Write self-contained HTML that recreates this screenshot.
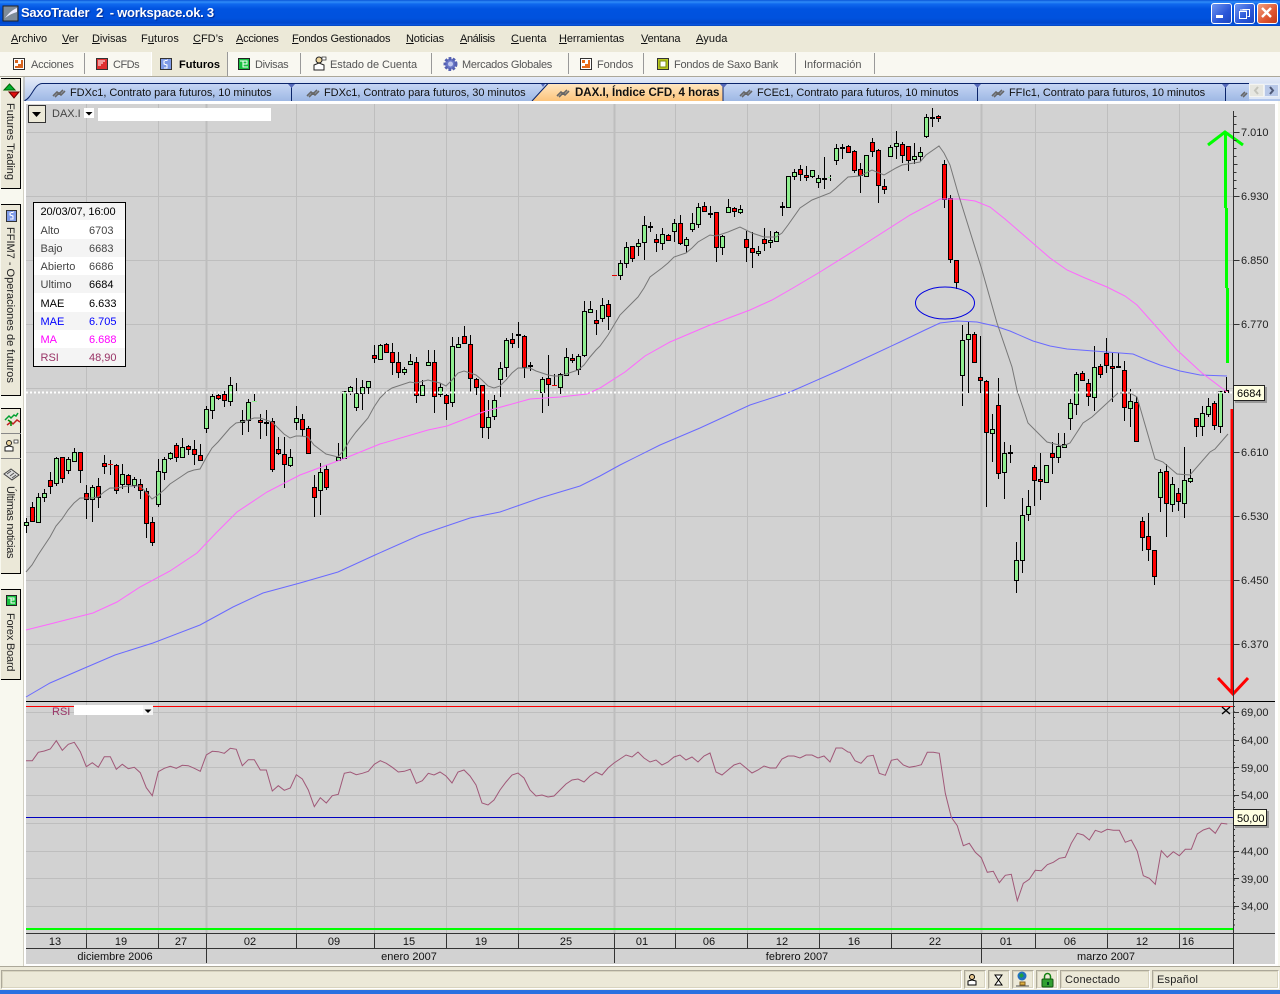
<!DOCTYPE html>
<html lang="es"><head><meta charset="utf-8"><title>SaxoTrader 2</title>
<style>
html,body{margin:0;padding:0;background:#f8f8ef}
body{width:1280px;height:994px;position:relative;overflow:hidden;font:11px "Liberation Sans",Arial,sans-serif;color:#000}
.a{position:absolute;white-space:nowrap}
.m{top:32px;font-size:11px;line-height:14px;color:#111}
.t{top:58px;font-size:11px;line-height:14px;color:#555}
.s{top:53px;width:1px;height:21px;background:#999}
.v{left:1px;width:19px;background:#ebe8d8;border:1px solid #000;border-left:none}
.r{position:absolute;left:0;width:19px;transform-origin:0 0;transform:translateX(19px) rotate(90deg);white-space:nowrap;font-size:11px;line-height:18px;color:#222}
.p{position:absolute;top:970px;height:17px;background:#ece9d8;border:1px solid;border-color:#aca899 #fff #fff #aca899;outline:1px solid #d8d4c0;outline-offset:-2px}
svg{position:absolute;left:0;top:0}
.w{position:absolute;top:3px;width:19px;height:19px;border:1px solid #fff;border-radius:3px}
</style></head><body>
<div class="a" style="left:0;top:0;width:1280px;height:26px;background:linear-gradient(#0a56d8 0,#2f8cf8 2px,#0f68ee 4px,#0053e0 9px,#0052de 18px,#0047cc 23px,#0a58e4 25px,#003ca8 26px)"></div>
<svg width="18" height="18" style="left:2px;top:5px"><rect x="1" y="1" width="15" height="15" fill="#7f8c99" stroke="#222"/><path d="M3 13C7 8 10 5 15 3V7C11 8 7 10 3 13Z" fill="#eef"/></svg>
<div class="a" style="left:21px;top:5px;font-size:13px;line-height:16px;font-weight:bold;color:#fff;letter-spacing:-.25px;text-shadow:1px 1px 1px #002a90;white-space:pre">SaxoTrader  2  - workspace.ok. 3</div>
<div class="w" style="left:1211px;background:linear-gradient(135deg,#6f96f0,#2a56d8 60%,#1c46c0)"></div>
<div class="w" style="left:1234px;background:linear-gradient(135deg,#6f96f0,#2a56d8 60%,#1c46c0)"></div>
<div class="w" style="left:1257px;background:linear-gradient(135deg,#f0a080,#df5530 60%,#c23a18)"></div>
<svg width="1280" height="26"><rect x="1216" y="15" width="7" height="3" fill="#fff"/><path d="M1242.5 9.5h7v7h-2M1239.5 11.5h7v7h-7z" fill="none" stroke="#fff"/><path d="M1240 10h7" stroke="#fff"/><path d="M1262 8l9 9M1271 8l-9 9" stroke="#fff" stroke-width="2.4"/></svg>

<div class="a" style="left:0;top:26px;width:1280px;height:26px;background:#ece9d8"></div>
<div class="a m" style="left:11px;letter-spacing:-.1px"><u>A</u>rchivo</div>
<div class="a m" style="left:62px"><u>V</u>er</div>
<div class="a m" style="left:92px;letter-spacing:-.1px"><u>D</u>ivisas</div>
<div class="a m" style="left:141px;letter-spacing:.1px">F<u>u</u>turos</div>
<div class="a m" style="left:193px"><u>C</u>FD’s</div>
<div class="a m" style="left:236px;letter-spacing:-.25px"><u>A</u>cciones</div>
<div class="a m" style="left:292px;letter-spacing:-.18px"><u>F</u>ondos Gestionados</div>
<div class="a m" style="left:406px;letter-spacing:-.15px"><u>N</u>oticias</div>
<div class="a m" style="left:460px;letter-spacing:-.4px"><u>A</u>nálisis</div>
<div class="a m" style="left:511px"><u>C</u>uenta</div>
<div class="a m" style="left:559px;letter-spacing:-.07px"><u>H</u>erramientas</div>
<div class="a m" style="left:641px;letter-spacing:-.15px"><u>V</u>entana</div>
<div class="a m" style="left:696px;letter-spacing:.1px"><u>A</u>yuda</div>

<div class="a" style="left:0;top:52px;width:1280px;height:24px;background:#f9f8f1"></div>
<div class="a" style="left:0;top:76px;width:1280px;height:1px;background:#aca899"></div>
<div class="a" style="left:151px;top:52px;width:75px;height:24px;background:#ece9d8;border-left:1px solid #fff;border-right:1px solid #999"></div>
<div class="a s" style="left:84px"></div><div class="a s" style="left:300px"></div><div class="a s" style="left:431px"></div><div class="a s" style="left:568px"></div><div class="a s" style="left:643px"></div><div class="a s" style="left:795px"></div><div class="a s" style="left:874px"></div>
<div class="a t" style="left:31px;letter-spacing:-.25px">Acciones</div>
<div class="a t" style="left:113px;letter-spacing:-.5px">CFDs</div>
<div class="a t" style="left:179px;font-weight:bold;color:#000">Futuros</div>
<div class="a t" style="left:255px;letter-spacing:-.3px">Divisas</div>
<div class="a t" style="left:330px;letter-spacing:-.06px">Estado de Cuenta</div>
<div class="a t" style="left:462px;letter-spacing:-.28px">Mercados Globales</div>
<div class="a t" style="left:597px;letter-spacing:-.08px">Fondos</div>
<div class="a t" style="left:674px;letter-spacing:-.22px">Fondos de Saxo Bank</div>
<div class="a t" style="left:804px">Información</div>

<!-- left strip tabs -->
<div class="a v" style="top:78px;height:109px"></div>
<div class="a v" style="top:204px;height:190px"></div>
<div class="a v" style="top:408px;height:164px"></div>
<div class="a v" style="top:589px;height:89px"></div>
<div class="a" style="left:1px;top:433px;width:20px;height:1px;background:#888"></div>
<div class="a" style="left:1px;top:458px;width:20px;height:1px;background:#888"></div>
<div class="r" style="top:103px">Futures Trading</div>
<div class="r" style="top:227px">FFIM7 - Operaciones de futuros</div>
<div class="r" style="top:486px;letter-spacing:-.3px">Últimas noticias</div>
<div class="r" style="top:613px;letter-spacing:-.2px">Forex Board</div>

<svg width="1280" height="994">
<defs>
<linearGradient id="g1" x1="0" y1="0" x2="0" y2="1"><stop offset="0" stop-color="#c6d6f4"/><stop offset="1" stop-color="#9eb8e4"/></linearGradient>
<linearGradient id="g2" x1="0" y1="0" x2="0" y2="1"><stop offset="0" stop-color="#ffe6c0"/><stop offset="1" stop-color="#fcc47c"/></linearGradient>
<linearGradient id="g0" x1="0" y1="0" x2="0" y2="1"><stop offset="0" stop-color="#e6ecf8"/><stop offset="1" stop-color="#aec4ea"/></linearGradient>
</defs>
<!-- toolbar icons -->
<g shape-rendering="crispEdges">
<rect x="13.5" y="58.5" width="11" height="11" fill="#fff" stroke="#333"/><rect x="15" y="60" width="8" height="8" fill="#d8641e"/><rect x="18" y="60" width="3" height="4" fill="#fff"/><rect x="15" y="63" width="3" height="3" fill="#fff"/>
<rect x="96.5" y="58.5" width="11" height="11" fill="#e03030" stroke="#333"/><path d="M98 61h7M98 63h5M98 65h3" stroke="#fff"/>
<rect x="160.5" y="58.5" width="11" height="11" fill="#7f9be8" stroke="#333"/><path d="M168 60l-4 1v3l3 1v3l-3 0" fill="none" stroke="#fff"/>
<rect x="238.5" y="58.5" width="11" height="11" fill="#18c040" stroke="#222"/><path d="M240 61h7v3h-4v3h5M243 61v3" fill="none" stroke="#fff"/>
<rect x="580.5" y="58.5" width="11" height="11" fill="#fff" stroke="#333"/><rect x="582" y="60" width="8" height="8" fill="#e86a18"/><rect x="585" y="60" width="3" height="4" fill="#fff"/><rect x="582" y="63" width="3" height="3" fill="#fff"/>
<rect x="657.5" y="58.5" width="11" height="11" fill="#b8c820" stroke="#333"/><rect x="660" y="61" width="6" height="6" fill="#fff" stroke="#7a8a10"/>
</g>
<circle cx="319" cy="60" r="3" fill="#f0d8a0" stroke="#222"/><path d="M314 70v-5l5-2 5 2v5z" fill="#fff" stroke="#222"/><rect x="322" y="57" width="4" height="3" fill="#fff" stroke="#222" stroke-width=".7"/>
<circle cx="450.500" cy="64" r="5.500" fill="#6a78c8" stroke="#5560b0" stroke-width="3" stroke-dasharray="2.500 1.500"/><circle cx="450.500" cy="64" r="2.500" fill="#c0c8ee"/>

<!-- tab row -->
<rect x="23" y="77" width="1257" height="24" fill="url(#g0)"/>
<path d="M24 101C32 98 34 84 42 83.500H1249V101Z" fill="url(#g1)"/>
<path d="M532 101L548 84H723V101Z" fill="url(#g2)"/>
<path d="M24 101C32 98 34 84 42 83.500H1249" fill="none" stroke="#0a246a"/>
<path d="M532 101L548 83.500M291.500 84V101M723 84V101M977.500 84V101M1225.500 84V101" fill="none" stroke="#0a246a"/>
<path d="M288 84h7l-3.500 4zM720 84h7l-3.500 4zM974 84h7l-3.500 4zM1222 84h7l-3.500 4zM541 84h4l-2 3z" fill="#5568b8"/>
<g font-size="11" font-family="Liberation Sans,Arial,sans-serif" fill="#111" letter-spacing="-.05">
<text x="70" y="96">FDXc1, Contrato para futuros, 10 minutos</text>
<text x="324" y="96">FDXc1, Contrato para futuros, 30 minutos</text>
<text x="575" y="96" font-weight="bold" letter-spacing="0" font-size="11.500">DAX.I, Índice CFD, 4 horas</text>
<text x="757" y="96">FCEc1, Contrato para futuros, 10 minutos</text>
<text x="1009" y="96">FFIc1, Contrato para futuros, 10 minutos</text>
</g>
<g fill="none" stroke="#666" stroke-width="1.600">
<path d="M53 96l4-4 2 2 4-4M55 97l4-4 2 2 4-4M307 96l4-4 2 2 4-4M309 97l4-4 2 2 4-4M557 96l4-4 2 2 4-4M559 97l4-4 2 2 4-4M740 96l4-4 2 2 4-4M742 97l4-4 2 2 4-4M992 96l4-4 2 2 4-4M994 97l4-4 2 2 4-4M1241 96l4-4M1243 97l4-4"/>
</g>
<rect x="1249" y="83" width="31" height="16" fill="#dfe7f6"/>
<rect x="1249.500" y="84.500" width="14" height="12" fill="#e6e6e0" stroke="#f4f4f0"/><rect x="1264.500" y="84.500" width="14" height="12" fill="#b8c8e8" stroke="#e8eef8"/>
<path d="M1258 87l-3 3.500 3 3.500" fill="none" stroke="#c4c4bc" stroke-width="2"/><path d="M1270 87l3 3.500-3 3.500" fill="none" stroke="#505a78" stroke-width="2"/>

<!-- left icons -->
<path d="M4 90l5.500-6 5.500 6z" fill="#00b030" stroke="#060"/><path d="M9 92h10l-5 6z" fill="#e01010" stroke="#600"/>
<g shape-rendering="crispEdges"><rect x="6.500" y="210.500" width="10" height="11" fill="#7f9be8" stroke="#333"/><path d="M14 212l-4 1v2l3 1v3l-3 0" fill="none" stroke="#fff"/>
<rect x="6.500" y="595.500" width="10" height="10" fill="#18c040" stroke="#222"/><path d="M8 598h6v2h-3v3h4M11 598v2" fill="none" stroke="#fff"/></g>
<path d="M5 420l4-4 2 2 3-3 2 1 2-3" fill="none" stroke="#00a030" stroke-width="1.500"/><path d="M7 425l4-3 2 2 4-4 3 2" fill="none" stroke="#c02020" stroke-width="1.500"/><path d="M8 420l3 2v4" fill="none" stroke="#080" stroke-width="1.500"/>
<circle cx="9" cy="443" r="2.500" fill="#f0d8a0" stroke="#222"/><path d="M5 451v-4l4-1 4 1v4z" fill="#fff" stroke="#222"/><rect x="14" y="440" width="4" height="3" fill="#fff" stroke="#222" stroke-width=".7"/>
<path d="M4 474l7-5 8 6-7 5z" fill="#ddd" stroke="#444"/><path d="M7 474l4-3M10 476l4-3M12 478l4-3" stroke="#555"/>

<!-- chart frame -->
<rect x="23.500" y="77" width="1" height="890" fill="#aca899"/>
<rect x="24" y="101" width="1254" height="866" fill="#fff"/>
<rect x="26" y="104" width="1249" height="860" fill="#d2d2d2"/>
<rect x="23" y="966" width="1257" height="1" fill="#aca899"/>
<rect x="0" y="967" width="1280" height="23" fill="#ece9d8"/>
<rect x="0" y="966" width="24" height="1" fill="#aca899"/>
<rect x="0" y="990" width="1280" height="4" fill="#2a70e0"/>

<!-- grid -->
<g stroke="#bebebe" shape-rendering="crispEdges" fill="none">
<path d="M86.500 104V933M158.500 104V933M296.500 104V933M374.500 104V933M446.500 104V933M518.500 104V933M675.500 104V933M747.500 104V933M819.500 104V933M891.500 104V933M1035.500 104V933M1107.500 104V933M1179.500 104V933"/>
<path d="M26 132.500H1240M26 196.500H1240M26 260.500H1240M26 324.500H1240M26 388.500H1240M26 452.500H1240M26 516.500H1240M26 580.500H1240M26 644.500H1240M26 712.500H1233M26 740.500H1233M26 767.500H1233M26 795.500H1233M26 823.500H1233M26 851.500H1233M26 878.500H1233M26 906.500H1233"/>
<path d="M206.500 104V933M614.500 104V933M981.500 104V933" stroke-width="2"/>
</g>

<!-- wicks -->
<path shape-rendering="crispEdges" fill="none" stroke="#000" d="M26.500 518V533M32.500 502V522M38.500 493V522M44.500 489V502M50.500 472V494M56.500 457V486M62.500 457V483M68.500 457V474M74.500 448V462M80.500 452V483M86.500 485V519M92.500 485V522M98.500 478V508M104.500 455V474M110.500 460V475M116.500 464V494M122.500 464V489M128.500 474V493M134.500 477V488M140.500 479V499M146.500 488V538M152.500 517V546M158.500 459V507M164.500 457V480M170.500 452V460M176.500 443V462M182.500 438V458M188.500 445V455M194.500 440V465M200.500 444V461M206.500 406V433M212.500 394V419M218.500 394V400M224.500 391V407M230.500 377V406M236.500 383V391M242.500 410V435M248.500 399V432M254.500 394V402M260.500 414V439M266.500 410V436M272.500 418V472M278.500 437V455M284.500 437V488M290.500 449V467M296.500 406V430M302.500 414V436M308.500 426V454M314.500 475V517M320.500 463V515M326.500 465V490M338.500 443V460M344.500 391V459M350.500 386V395M356.500 378V411M362.500 380V410M368.500 381V394M374.500 345V363M380.500 344V359M386.500 343V353M392.500 343V375M398.500 352V378M404.500 367V375M410.500 354V365M416.500 357V403M422.500 380V395M428.500 350V366M434.500 350V413M440.500 383V397M446.500 394V420M452.500 337V407M458.500 337V348M464.500 326V344M470.500 335V393M476.500 378V395M482.500 385V438M488.500 400V439M494.500 395V420M500.500 362V397M506.500 338V377M512.500 333V348M518.500 322V348M524.500 335V378M530.500 362V371M542.500 377V413M548.500 355V406M554.500 374V385M560.500 373V394M566.500 348V375M572.500 354V363M578.500 354V375M584.500 301V357M590.500 301V313M596.500 310V335M602.500 298V322M608.500 300V330M620.500 260V280M626.500 242V268M632.500 246V262M638.500 239V256M644.500 216V260M650.500 222V232M656.500 234V252M662.500 228V250M668.500 234V241M674.500 219V242M680.500 215V245M686.500 237V253M692.500 213V232M698.500 203V228M704.500 202V212M710.500 206V218M716.500 212V262M722.500 235V255M728.500 199V213M734.500 207V217M740.500 205V214M746.500 231V262M752.500 232V268M758.500 246V256M764.500 228V251M770.500 231V248M776.500 231V241M782.500 202V216M788.500 176V207M794.500 169V180M800.500 165V181M806.500 166V181M812.500 170V178M818.500 175V188M824.500 157V189M830.500 175V181M836.500 144V165M842.500 144V159M848.500 145V153M854.500 150V173M860.500 163V193M866.500 155V176M872.500 138V157M878.500 149V203M884.500 179V194M890.500 145V157M896.500 131V159M902.500 142V163M908.500 146V171M914.500 143V164M920.500 147V161M926.500 114V138M932.500 108V127M938.500 115V122M944.500 160V208M950.500 195V263M956.500 260V289M962.500 325V406M968.500 322V393M974.500 332V362M980.500 336V393M986.500 380V507M992.500 414V462M998.500 378V479M1004.500 442V499M1010.500 445V463M1016.500 542V593M1022.500 498V573M1028.500 490V521M1034.500 465V506M1040.500 453V500M1046.500 465V483M1052.500 442V474M1058.500 433V463M1064.500 433V448M1070.500 399V430M1076.500 372V415M1082.500 371V381M1088.500 379V406M1094.500 346V411M1100.500 364V378M1106.500 338V373M1112.500 353V402M1118.500 353V368M1124.500 361V421M1130.500 389V427M1136.500 397V441M1142.500 517V551M1148.500 513V561M1154.500 550V585M1160.500 469V512M1166.500 464V537M1172.500 477V512M1178.500 488V511M1184.500 447V518M1190.500 469V483M1196.500 418V437M1202.500 406V436M1208.500 398V417M1214.500 401V430M1220.500 391V433M1226.500 377V393"/>
<!-- green bodies -->
<path shape-rendering="crispEdges" fill="#90ee90" stroke="#000" d="M24.500 522.500h4v3h-4zM36.500 497.500h4v25h-4zM42.500 493.500h4v4h-4zM54.500 458.500h4v25h-4zM66.500 459.500h4v11h-4zM72.500 452.500h4v9h-4zM90.500 487.500h4v12h-4zM120.500 474.500h4v10h-4zM132.500 479.500h4v6h-4zM156.500 471.500h4v33h-4zM162.500 459.500h4v13h-4zM168.500 453.500h4v5h-4zM180.500 447.500h4v10h-4zM204.500 409.500h4v19h-4zM210.500 396.500h4v14h-4zM228.500 385.500h4v16h-4zM240.500 420.500h4v2h-4zM246.500 402.500h4v18h-4zM288.500 457.500h4v8h-4zM294.500 418.500h4v4h-4zM318.500 472.500h4v18h-4zM336.500 457.500h4v3h-4zM342.500 391.500h4v67h-4zM348.500 387.500h4v4h-4zM354.500 393.500h4v14h-4zM360.500 387.500h4v6h-4zM366.500 381.500h4v6h-4zM378.500 345.500h4v14h-4zM402.500 369.500h4v3h-4zM408.500 361.500h4v3h-4zM420.500 385.500h4v10h-4zM426.500 362.500h4v3h-4zM438.500 387.500h4v7h-4zM450.500 346.500h4v56h-4zM456.500 344.500h4v3h-4zM486.500 417.500h4v10h-4zM492.500 400.500h4v16h-4zM498.500 368.500h4v11h-4zM504.500 340.500h4v27h-4zM540.500 379.500h4v13h-4zM558.500 374.500h4v13h-4zM564.500 357.500h4v18h-4zM576.500 356.500h4v13h-4zM582.500 311.500h4v44h-4zM588.500 309.500h4v3h-4zM600.500 305.500h4v13h-4zM618.500 263.500h4v12h-4zM624.500 247.500h4v16h-4zM636.500 243.500h4v3h-4zM642.500 225.500h4v17h-4zM660.500 234.500h4v9h-4zM672.500 223.500h4v8h-4zM684.500 239.500h4v6h-4zM690.500 223.500h4v6h-4zM696.500 207.500h4v17h-4zM720.500 236.500h4v11h-4zM726.500 207.500h4v5h-4zM738.500 209.500h4v3h-4zM756.500 251.500h4v2h-4zM768.500 240.500h4v2h-4zM774.500 232.500h4v9h-4zM786.500 176.500h4v31h-4zM792.500 172.500h4v4h-4zM810.500 170.500h4v6h-4zM816.500 178.500h4v4h-4zM834.500 148.500h4v12h-4zM864.500 155.500h4v21h-4zM888.500 147.500h4v9h-4zM894.500 143.500h4v3h-4zM912.500 156.500h4v3h-4zM918.500 152.500h4v4h-4zM924.500 117.500h4v19h-4zM960.500 340.500h4v35h-4zM966.500 334.500h4v5h-4zM990.500 429.500h4v4h-4zM1002.500 453.500h4v19h-4zM1014.500 560.500h4v20h-4zM1020.500 515.500h4v45h-4zM1026.500 506.500h4v8h-4zM1044.500 465.500h4v17h-4zM1056.500 446.500h4v11h-4zM1062.500 444.500h4v3h-4zM1068.500 403.500h4v15h-4zM1074.500 374.500h4v30h-4zM1092.500 367.500h4v30h-4zM1128.500 401.500h4v7h-4zM1158.500 472.500h4v25h-4zM1170.500 484.500h4v20h-4zM1182.500 480.500h4v23h-4zM1188.500 478.500h4v3h-4zM1200.500 413.500h4v13h-4zM1206.500 406.500h4v8h-4zM1218.500 391.500h4v35h-4z"/>
<!-- red bodies and dashes -->
<path shape-rendering="crispEdges" fill="#f00" stroke="#000" d="M30.500 507.500h4v14h-4zM48.500 480.500h4v6h-4zM60.500 457.500h4v21h-4zM78.500 452.500h4v18h-4zM84.500 493.500h4v6h-4zM96.500 486.500h4v11h-4zM102.500 463.500h4v3h-4zM114.500 465.500h4v25h-4zM126.500 475.500h4v9h-4zM138.500 484.500h4v6h-4zM144.500 491.500h4v32h-4zM150.500 522.500h4v20h-4zM174.500 445.500h4v12h-4zM186.500 446.500h4v3h-4zM192.500 449.500h4v5h-4zM198.500 455.500h4v5h-4zM216.500 395.500h4v3h-4zM222.500 394.500h4v6h-4zM258.500 420.500h4v2h-4zM270.500 421.500h4v48h-4zM276.500 449.500h4v4h-4zM282.500 454.500h4v10h-4zM300.500 419.500h4v10h-4zM306.500 428.500h4v25h-4zM312.500 487.500h4v10h-4zM324.500 469.500h4v18h-4zM372.500 355.500h4v3h-4zM384.500 344.500h4v8h-4zM390.500 352.500h4v10h-4zM396.500 362.500h4v10h-4zM414.500 362.500h4v33h-4zM432.500 362.500h4v34h-4zM444.500 395.500h4v8h-4zM462.500 336.500h4v7h-4zM468.500 344.500h4v34h-4zM474.500 379.500h4v8h-4zM480.500 385.500h4v42h-4zM510.500 339.500h4v4h-4zM522.500 336.500h4v31h-4zM546.500 378.500h4v6h-4zM570.500 358.500h4v2h-4zM594.500 320.500h4v3h-4zM606.500 304.500h4v12h-4zM630.500 246.500h4v12h-4zM654.500 239.500h4v3h-4zM666.500 235.500h4v5h-4zM678.500 223.500h4v20h-4zM702.500 206.500h4v5h-4zM714.500 212.500h4v35h-4zM732.500 208.500h4v3h-4zM744.500 239.500h4v8h-4zM750.500 248.500h4v4h-4zM762.500 239.500h4v4h-4zM798.500 169.500h4v5h-4zM804.500 175.500h4v2h-4zM846.500 146.500h4v6h-4zM852.500 151.500h4v19h-4zM858.500 169.500h4v6h-4zM870.500 142.500h4v9h-4zM876.500 150.500h4v35h-4zM882.500 186.500h4v3h-4zM900.500 144.500h4v11h-4zM906.500 146.500h4v14h-4zM936.500 116.500h4v2h-4zM942.500 164.500h4v35h-4zM948.500 198.500h4v61h-4zM954.500 260.500h4v22h-4zM972.500 334.500h4v28h-4zM978.500 377.500h4v3h-4zM984.500 381.500h4v51h-4zM996.500 405.500h4v68h-4zM1032.500 467.500h4v13h-4zM1038.500 479.500h4v2h-4zM1050.500 453.500h4v4h-4zM1080.500 373.500h4v7h-4zM1086.500 383.500h4v13h-4zM1098.500 366.500h4v8h-4zM1104.500 353.500h4v12h-4zM1110.500 366.500h4v2h-4zM1122.500 370.500h4v37h-4zM1134.500 402.500h4v39h-4zM1140.500 521.500h4v16h-4zM1146.500 536.500h4v13h-4zM1152.500 550.500h4v26h-4zM1164.500 471.500h4v32h-4zM1176.500 493.500h4v8h-4zM1194.500 418.500h4v8h-4zM1212.500 403.500h4v22h-4zM1224.500 390.500h4v2h-4z"/>
<path shape-rendering="crispEdges" fill="none" stroke="#000" stroke-width="2" d="M264 423h5M516 335h5M528 366h5M648 227h5M708 214h5M780 207h5M822 179h5M840 148h5M930 118h5M1008 453h5M1116 367h5"/>
<path shape-rendering="crispEdges" fill="none" stroke="#e00000" d="M108 464.500h5M552 385.500h5M612 275.500h5"/>
<path shape-rendering="crispEdges" fill="none" stroke="#90ee90" d="M252 401.500h5M534 390.500h5M828 177.500h3"/>

<!-- MA lines -->
<polyline fill="none" stroke="#6a6aff" points="26,697 50,683 80,670 115,655 153,643 200,625 233,607 263,593 300,583 338,572 375,555 420,535 470,518 500,512 520,505 540,498 580,486 600,476 620,465 660,445 700,428 750,405 790,392 840,370 900,342 925,330 940,323 957,321 977,322 995,326 1010,331 1033,341 1050,346 1067,349 1107,352 1133,354 1147,360 1160,365 1180,371 1200,375 1227,376"/>
<polyline fill="none" stroke="#ff66ff" points="26,630 50,624 93,613 117,602 140,587 170,571 197,553 217,532 237,512 267,492 300,475 343,459 380,444 428,430 447,426 483,412 530,399 560,397 587,394 600,388 625,372 645,356 670,342 710,325 750,310 772,300 793,288 820,272 860,247 910,215 940,199 960,199 975,201 990,207 1005,219 1020,232 1035,245 1050,258 1067,270 1085,278 1107,287 1125,296 1137,305 1153,323 1177,350 1202,373 1227,392"/>
<polyline fill="none" stroke="#777" points="26,572 32,565 38,555 44,546 50,537 56,526 62,519 68,510 74,503 80,498 86,498 92,498 98,497 104,492 110,488 116,488 122,487 128,486 134,486 140,486 146,492 152,499 158,495 164,490 170,484 176,480 182,476 188,472 194,470 200,469 206,458 212,448 218,442 224,435 230,428 236,423 242,422 248,420 254,418 260,418 266,420 272,422 278,428 284,434 290,438 296,436 300,436 308,437 314,445 326,454 338,457 344,450 350,440 356,432 362,425 368,418 374,407 380,398 386,392 392,388 398,386 410,382 416,383 428,380 440,383 446,386 452,380 458,373 464,371 470,373 476,375 482,380 488,386 494,388 500,386 506,380 512,373 518,368 524,368 530,368 536,371 542,373 548,375 554,376 560,376 566,374 572,372 578,370 584,365 590,357 596,350 600,346 608,335 620,315 638,297 644,288 650,277 662,268 668,263 674,257 686,253 692,248 698,242 710,235 716,236 728,232 740,227 752,233 764,237 776,237 782,233 788,225 800,208 812,200 830,193 836,188 848,177 860,176 872,170 884,175 896,168 902,165 920,162 926,155 939,146 944,153 950,165 958,193 982,270 997,323 1012,367 1017,390 1028,423 1047,442 1063,446 1070,443 1083,423 1092,417 1118,393 1130,393 1137,397 1155,459 1163,462 1177,474 1190,475 1210,452 1215,449 1228,434"/>
<!-- dotted price line -->
<path d="M26 392.500H1233" stroke="#fff" stroke-width="2" stroke-dasharray="2 2" shape-rendering="crispEdges"/>
<!-- annotations -->
<ellipse cx="945" cy="303" rx="29.500" ry="16" fill="none" stroke="#0000e0"/>
<path d="M1225.500 133V208M1226.500 208V288M1227.500 288V363" stroke="#00ff00" stroke-width="3" fill="none"/>
<path d="M1208 145L1225 132L1243 145" stroke="#00ff00" stroke-width="3" fill="none"/>
<path d="M1232 409V692" stroke="#f00" stroke-width="3" fill="none"/>
<path d="M1218 678L1233 694L1248 678" stroke="#f00" stroke-width="3" fill="none"/>

<!-- top-left controls -->
<rect x="28.500" y="105.500" width="17" height="17" fill="#ece9d8" stroke="#333"/><path d="M32 112h9l-4.500 5z" fill="#000"/>
<text x="52" y="117" font-size="11" fill="#444" font-family="Liberation Sans,Arial,sans-serif">DAX.I</text>
<rect x="84" y="108" width="10" height="10" fill="#fff"/><path d="M85.500 112h7l-3.500 3.500z" fill="#000"/>
<rect x="98" y="108" width="173" height="13" fill="#fff"/>

<!-- axis -->
<g shape-rendering="crispEdges" fill="none" stroke="#333">
<path d="M1233.500 111V964"/>
<path d="M1233.500 116.500h3M1233.500 124.500h3M1233.500 132.500h6M1233.500 140.500h3M1233.500 148.500h3M1233.500 156.500h3M1233.500 164.500h4M1233.500 172.500h3M1233.500 180.500h3M1233.500 188.500h3M1233.500 196.500h6M1233.500 260.500h6M1233.500 324.500h6M1233.500 452.500h6M1233.500 516.500h6M1233.500 580.500h6M1233.500 644.500h6"/>
</g>
<path shape-rendering="crispEdges" stroke="#333" stroke-width="2" stroke-dasharray="1 4.600" d="M1234 706V928"/>
<path shape-rendering="crispEdges" stroke="#333" d="M1233 712.500h6M1233 740.500h6M1233 767.500h6M1233 795.500h6M1233 851.500h6M1233 878.500h6M1233 906.500h6"/>
<g font-size="11" font-family="Liberation Sans,Arial,sans-serif" fill="#222">
<text x="1241" y="136">7.010</text><text x="1241" y="200">6.930</text><text x="1241" y="264">6.850</text><text x="1241" y="328">6.770</text><text x="1241" y="456">6.610</text><text x="1241" y="520">6.530</text><text x="1241" y="584">6.450</text><text x="1241" y="648">6.370</text>
<text x="1241" y="716">69,00</text><text x="1241" y="744">64,00</text><text x="1241" y="772">59,00</text><text x="1241" y="799">54,00</text><text x="1241" y="855">44,00</text><text x="1241" y="883">39,00</text><text x="1241" y="910">34,00</text>
</g>
<rect x="1235" y="387" width="32" height="16" fill="#999"/>
<rect x="1233.500" y="385.500" width="31" height="15" fill="#ffffe1" stroke="#222"/>
<text x="1237" y="397" font-size="11" font-family="Liberation Sans,Arial,sans-serif">6684</text>

<!-- RSI panel -->
<path shape-rendering="crispEdges" d="M26 701.500H1275" stroke="#000"/>
<path shape-rendering="crispEdges" d="M26 706.500H1233" stroke="#f00"/>
<path shape-rendering="crispEdges" d="M26 817.500H1233" stroke="#0000c0"/>
<path shape-rendering="crispEdges" d="M26 929H1233" stroke="#00ff00" stroke-width="2"/>
<text x="52" y="715" font-size="11" fill="#993366" font-family="Liberation Sans,Arial,sans-serif">RSI</text>
<rect x="74" y="705" width="69" height="10" fill="#fff"/><rect x="143" y="705" width="10" height="10" fill="#f4f4f4"/><path d="M144.500 709.500h7l-3.500 3.500z" fill="#000"/>
<path d="M1222 707l8 7M1230 707l-8 7" stroke="#000" stroke-width="1.400"/>
<polyline fill="none" stroke="#a05878" points="26,760.700 32.300,760.700 38.300,752.300 44.300,751 50.300,749 56.300,740.700 62.300,750.300 68.300,744.300 74.300,742.300 80.300,751.700 86.300,766.700 92.300,762.700 98.300,767.300 104.300,756.700 110.300,756.700 116.300,769.300 122.300,764.300 128.300,768.700 134.300,767.300 140.300,772.700 146.300,787.700 152.300,795.700 158.300,771.700 164.300,768.300 170.300,766.300 176.300,768.300 182.300,765.300 188.300,765.700 194.300,768.300 200.300,771.300 206.300,755 212.300,751.300 218.300,751.700 224.300,753.300 230.300,748.300 236.300,749.300 242.300,765.700 248.300,759.700 254.300,759.700 260.300,770 266.300,770 272.300,791 278.300,785.700 284.300,790.300 290.300,788 296.300,774.700 302.300,779 308.300,790 314.300,806.700 320.300,797.700 326.300,803 332.300,795.700 338.300,794.300 344.300,773.300 350.300,772 356.300,774.700 362.300,773.300 368.300,771.300 374.300,764.300 380.300,760.700 386.300,763.300 392.300,767.300 398.300,772 404.300,771.300 410.300,769.300 416.300,783.300 422.300,780.700 428.300,773.300 434,775 440,772 446,776 452,783 458,772 464,770 470,776 476,785 482,803 488,805 494,800 500,790 506,782 512,775 518,773 524,778 530,790 536,796 542,795 548,797 554,796 560,790 566,784 572,780 578,779 584,782 590,776 596,772 602,775 608,768 614,763 620,759 626,755 632,757 638,752 644,758 650,762 656,760 662,765 668,762 674,757 680,755 686,760 692,757 698,762 704,756 710,753 716,772 722,775 728,770 734,765 740,763 746,768 752,773 758,770 764,766 770,768 776,768 782,759 788,756 794,756 800,758 806,755 812,755 818,758 824,756 830,762 836,748 842,748 848,752 850,752.300 855,760.700 861,763.300 867.300,756.300 873.300,755.300 879.300,773.300 885.300,775.300 891.300,760.300 897.300,759 903.300,765 909.300,767.300 915.300,766.300 921.300,764.700 927.300,752.300 933.300,752.300 939.300,753.300 945.300,793.300 951.300,817.300 957.300,825.700 963.300,845.700 969.300,843.300 975.300,852.300 981.300,857.700 987.300,872.300 993.300,871.300 999.300,882.700 1005.300,875.300 1011.300,874.300 1017.300,900.700 1023.300,883.300 1029.300,879.300 1035.300,870.300 1041.300,870.700 1047.300,864.700 1053.300,862.300 1059.300,858.300 1065.300,857.300 1071.300,843.300 1077.300,833.300 1083.300,835 1089.300,840 1095.300,830.300 1101.300,832.300 1107.300,829.300 1113.300,830.300 1119.300,830.300 1125.300,842.300 1131.300,840 1137.300,851.300 1143.300,875.700 1149.300,878.300 1155.300,884.300 1161.300,850.700 1167.300,857.300 1173.300,851.700 1179.300,855.700 1185.300,849.300 1191.300,849.300 1197.300,834 1203.300,830 1209.300,828 1215.300,833.300 1221.300,823.300 1227.300,824"/>
<rect x="1235" y="811" width="34" height="17" fill="#999"/>
<rect x="1233.500" y="809.500" width="33" height="16" fill="#ffffe1" stroke="#222"/>
<text x="1237" y="822" font-size="11" font-family="Liberation Sans,Arial,sans-serif">50,00</text>

<!-- date axis -->
<path shape-rendering="crispEdges" d="M26 933.500H1275M26 948.500H1233M86.500 933V948M158.500 933V948M206.500 933V963M296.500 933V948M374.500 933V948M446.500 933V948M518.500 933V948M614.500 933V963M675.500 933V948M747.500 933V948M819.500 933V948M891.500 933V948M981.500 933V963M1035.500 933V948M1107.500 933V948M1179.500 933V948" stroke="#333" fill="none"/>
<g font-size="11" font-family="Liberation Sans,Arial,sans-serif" fill="#111" text-anchor="middle">
<text x="55" y="945">13</text><text x="121" y="945">19</text><text x="181" y="945">27</text><text x="250" y="945">02</text><text x="334" y="945">09</text><text x="409" y="945">15</text><text x="481" y="945">19</text><text x="566" y="945">25</text><text x="642" y="945">01</text><text x="709" y="945">06</text><text x="782" y="945">12</text><text x="854" y="945">16</text><text x="935" y="945">22</text><text x="1006" y="945">01</text><text x="1070" y="945">06</text><text x="1142" y="945">12</text><text x="1188" y="945">16</text>
<text x="115" y="960">diciembre 2006</text><text x="409" y="960">enero 2007</text><text x="797" y="960">febrero 2007</text><text x="1106" y="960">marzo 2007</text>
</g>

<!-- info box -->
<g shape-rendering="crispEdges">
<rect x="33.500" y="202.500" width="92" height="164" fill="#fff" stroke="#000"/>
<rect x="34" y="203" width="91" height="17" fill="#f4f4f4"/><rect x="34" y="239" width="91" height="18" fill="#f4f4f4"/><rect x="34" y="275" width="91" height="18" fill="#f4f4f4"/><rect x="34" y="312" width="91" height="18" fill="#f4f4f4"/><rect x="34" y="348" width="91" height="18" fill="#f4f4f4"/>
</g>
<g font-size="11" font-family="Liberation Sans,Arial,sans-serif" fill="#444">
<text x="40.500" y="215" fill="#000" letter-spacing="-.1">20/03/07, 16:00</text>
<text x="40.500" y="234">Alto</text><text x="89" y="234">6703</text>
<text x="40.500" y="252">Bajo</text><text x="89" y="252">6683</text>
<text x="40.500" y="270">Abierto</text><text x="89" y="270">6686</text>
<text x="40.500" y="288">Ultimo</text><text x="89" y="288" fill="#000">6684</text>
<text x="40.500" y="307" fill="#000">MAE</text><text x="89" y="307" fill="#000">6.633</text>
<text x="40.500" y="325" fill="#0000ff">MAE</text><text x="89" y="325" fill="#0000ff">6.705</text>
<text x="40.500" y="343" fill="#ff00ff">MA</text><text x="89" y="343" fill="#ff00ff">6.688</text>
<text x="40.500" y="361" fill="#993366">RSI</text><text x="89" y="361" fill="#993366">48,90</text>
</g>
</svg>

<div class="p" style="left:1px;width:959px"></div>
<div class="p" style="left:964px;width:20px"></div>
<div class="p" style="left:988px;width:20px"></div>
<div class="p" style="left:1012px;width:20px"></div>
<div class="p" style="left:1036px;width:20px"></div>
<div class="p" style="left:1060px;width:88px"></div>
<div class="p" style="left:1152px;width:125px"></div>
<svg width="1280" height="994"><circle cx="972" cy="977" r="2.500" fill="#e8c890" stroke="#000"/><path d="M968 985v-4l4-1 4 1v4z" fill="#fff" stroke="#000"/><path d="M995 975h7l-3.500 5 3.500 5h-7l3.500-5z" fill="#fff" stroke="#000"/><circle cx="1022" cy="976" r="4.500" fill="#2070c0"/><path d="M1019 975l3-2 2 3-3 2z" fill="#20a040"/><rect x="1020" y="982" width="5" height="3" fill="#e0b040" stroke="#806020"/><path d="M1016 986h13" stroke="#555"/><rect x="1042" y="979" width="11" height="8" rx="1" fill="#30a030" stroke="#105010"/><path d="M1044.500 979v-2.500a3 3 0 0 1 6 0v2.500" fill="none" stroke="#108010" stroke-width="1.500"/><rect x="1047" y="982" width="2" height="3" fill="#042"/></svg>
<div class="a" style="left:1065px;top:973px;font-size:11px;line-height:14px;letter-spacing:.2px;color:#222">Conectado</div>
<div class="a" style="left:1157px;top:973px;font-size:11px;line-height:14px;letter-spacing:.2px;color:#222">Español</div>
</body></html>
